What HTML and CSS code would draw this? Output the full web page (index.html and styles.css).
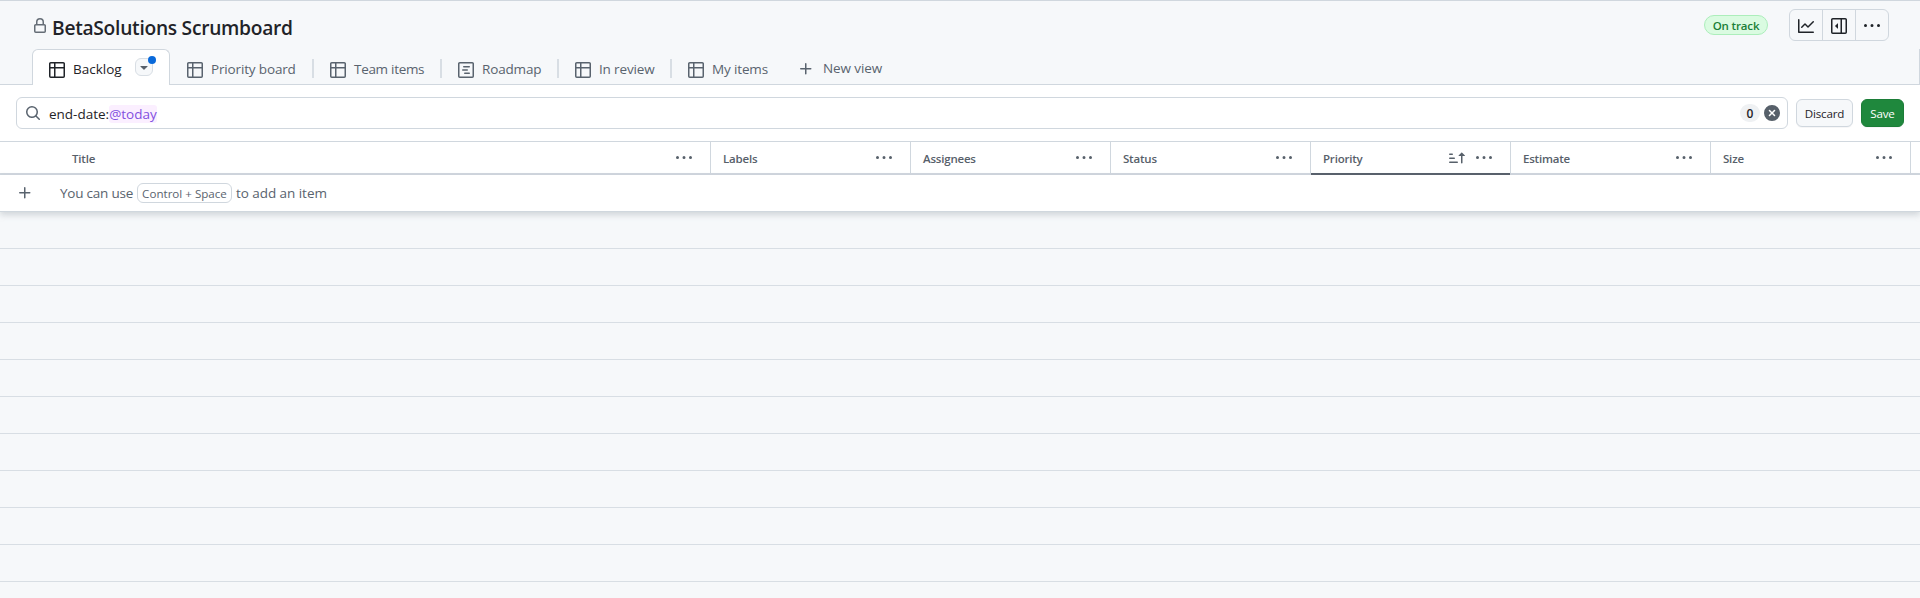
FILE: index.html
```html
<!DOCTYPE html>
<html lang="en">
<head>
<meta charset="utf-8">
<title>BetaSolutions Scrumboard</title>
<link rel="stylesheet" href="styles.css">
</head>
<body>
<svg class="sprite" aria-hidden="true">
  <symbol id="i-table" viewBox="0 0 16 16"><path d="M0 1.75C0 .784.784 0 1.75 0h12.5C15.216 0 16 .784 16 1.75v12.5A1.75 1.75 0 0 1 14.25 16H1.75A1.75 1.75 0 0 1 0 14.25ZM6.5 6.5v8h7.75a.25.25 0 0 0 .25-.25V6.5Zm8-1.5V1.75a.25.25 0 0 0-.25-.25H6.5V5Zm-13 1.5v7.75c0 .138.112.25.25.25H5v-8ZM5 5V1.5H1.75a.25.25 0 0 0-.25.25V5Z"/></symbol>
  <symbol id="i-roadmap" viewBox="0 0 16 16"><path fill-rule="evenodd" d="M1.75 0h12.5C15.216 0 16 .784 16 1.75v12.5A1.75 1.75 0 0 1 14.25 16H1.75A1.75 1.75 0 0 1 0 14.25V1.75C0 .784.784 0 1.75 0ZM1.5 1.75v12.5c0 .138.112.25.25.25h12.5a.25.25 0 0 0 .25-.25V1.75a.25.25 0 0 0-.25-.25H1.75a.25.25 0 0 0-.25.25Z"/><path fill="none" stroke="currentColor" stroke-width="1.5" stroke-linecap="round" d="M5.75 4.75h5.5M4.75 8h4.5M6.75 11.25h4.5"/></symbol>
  <symbol id="i-lock" viewBox="0 0 16 16"><path d="M4 4a4 4 0 0 1 8 0v2h.25c.966 0 1.75.784 1.75 1.75v5.5A1.75 1.75 0 0 1 12.25 15h-8.5A1.75 1.75 0 0 1 2 13.25v-5.5C2 6.784 2.784 6 3.75 6H4Zm8.25 3.5h-8.5a.25.25 0 0 0-.25.25v5.5c0 .138.112.25.25.25h8.5a.25.25 0 0 0 .25-.25v-5.5a.25.25 0 0 0-.25-.25ZM10.5 6V4a2.5 2.5 0 1 0-5 0v2Z"/></symbol>
  <symbol id="i-search" viewBox="0 0 16 16"><path d="M10.68 11.74a6 6 0 0 1-7.922-8.982 6 6 0 0 1 8.982 7.922l3.04 3.04a.749.749 0 0 1-.326 1.275.749.749 0 0 1-.734-.215ZM11.5 7a4.499 4.499 0 1 0-8.997 0A4.499 4.499 0 0 0 11.5 7Z"/></symbol>
  <symbol id="i-graph" viewBox="0 0 16 16"><path d="M1.5 1.75V13.5h13.75a.75.75 0 0 1 0 1.5H.75a.75.75 0 0 1-.75-.75V1.75a.75.75 0 0 1 1.5 0Zm14.28 2.53-5.25 5.25a.75.75 0 0 1-1.06 0L7 7.06 4.28 9.78a.751.751 0 0 1-1.042-.018.751.751 0 0 1-.018-1.042l3.25-3.25a.75.75 0 0 1 1.06 0L10 7.94l4.72-4.72a.751.751 0 0 1 1.042.018.751.751 0 0 1 .018 1.042Z"/></symbol>
  <symbol id="i-sidebar" viewBox="0 0 16 16"><path d="m4.177 7.823 2.396-2.396A.25.25 0 0 1 7 5.604v4.792a.25.25 0 0 1-.427.177L4.177 8.177a.25.25 0 0 1 0-.354Z"/><path d="M0 1.75C0 .784.784 0 1.75 0h12.5C15.216 0 16 .784 16 1.75v12.5A1.75 1.75 0 0 1 14.25 16H1.75A1.75 1.75 0 0 1 0 14.25Zm1.75-.25a.25.25 0 0 0-.25.25v12.5c0 .138.112.25.25.25H9.5v-13Zm12.5 13a.25.25 0 0 0 .25-.25V1.75a.25.25 0 0 0-.25-.25H11v13Z"/></symbol>
  <symbol id="i-kebab" viewBox="0 0 16 16"><path d="M8 9a1.5 1.5 0 1 0 0-3 1.5 1.5 0 0 0 0 3ZM1.5 9a1.5 1.5 0 1 0 0-3 1.5 1.5 0 0 0 0 3Zm13 0a1.5 1.5 0 1 0 0-3 1.5 1.5 0 0 0 0 3Z"/></symbol>
  <symbol id="i-sort" viewBox="0 0 16 16"><path d="m12.927 2.573 3 3A.25.25 0 0 1 15.75 6H13.5v6.75a.75.75 0 0 1-1.5 0V6H9.75a.25.25 0 0 1-.177-.427l3-3a.25.25 0 0 1 .354 0ZM0 12.25a.75.75 0 0 1 .75-.75h7.5a.75.75 0 0 1 0 1.5H.75a.75.75 0 0 1-.75-.75Zm0-4a.75.75 0 0 1 .75-.75h4.5a.75.75 0 0 1 0 1.5H.75A.75.75 0 0 1 0 8.25Zm0-4a.75.75 0 0 1 .75-.75h2.5a.75.75 0 0 1 0 1.5H.75A.75.75 0 0 1 0 4.25Z"/></symbol>
  <symbol id="i-plus" viewBox="0 0 16 16"><path d="M7.75 2a.75.75 0 0 1 .75.75V7h4.25a.75.75 0 0 1 0 1.5H8.5v4.25a.75.75 0 0 1-1.5 0V8.5H2.75a.75.75 0 0 1 0-1.5H7V2.75A.75.75 0 0 1 7.75 2Z"/></symbol>
  <symbol id="i-clear" viewBox="0 0 16 16"><path d="M2.343 13.657A8 8 0 1 1 13.658 2.343 8 8 0 0 1 2.343 13.657ZM6.03 4.97a.751.751 0 0 0-1.042.018.751.751 0 0 0-.018 1.042L6.94 8 4.97 9.97a.749.749 0 0 0 .326 1.275.749.749 0 0 0 .734-.215L8 9.06l1.97 1.97a.749.749 0 0 0 1.275-.326.749.749 0 0 0-.215-.734L9.06 8l1.97-1.97a.749.749 0 0 0-.326-1.275.749.749 0 0 0-.734.215L8 6.94Z"/></symbol>
  <symbol id="i-triangle" viewBox="0 0 16 16"><path d="m4.427 7.427 3.396 3.396a.25.25 0 0 0 .354 0l3.396-3.396A.25.25 0 0 0 11.396 7H4.604a.25.25 0 0 0-.177.427Z"/></symbol>
</svg>

<header class="project-header">
  <div class="title-row">
    <svg class="icon lock"><use href="#i-lock"/></svg>
    <h1 class="title">BetaSolutions Scrumboard</h1>
    <span class="status">On track</span>
    <div class="actions">
      <button class="action"><svg class="icon"><use href="#i-graph"/></svg></button>
      <button class="action"><svg class="icon"><use href="#i-sidebar"/></svg></button>
      <button class="action"><svg class="icon kebab"><use href="#i-kebab"/></svg></button>
    </div>
  </div>
  <nav class="tabs">
    <div class="tab tab-active">
      <svg class="icon"><use href="#i-table"/></svg><span class="label label-backlog">Backlog</span>
      <button class="view-menu"><svg class="icon"><use href="#i-triangle"/></svg><i class="dot"></i></button>
    </div>
    <div class="tab tab-first"><svg class="icon"><use href="#i-table"/></svg><span class="label label-priority">Priority board</span></div>
    <div class="tab"><svg class="icon"><use href="#i-table"/></svg><span class="label label-team">Team items</span></div>
    <div class="tab"><svg class="icon"><use href="#i-roadmap"/></svg><span class="label label-roadmap">Roadmap</span></div>
    <div class="tab"><svg class="icon"><use href="#i-table"/></svg><span class="label label-review">In review</span></div>
    <div class="tab tab-last"><svg class="icon"><use href="#i-table"/></svg><span class="label label-mine">My items</span></div>
    <div class="new-view"><svg class="icon"><use href="#i-plus"/></svg><span class="new-label">New view</span></div>
    <div class="tabs-end"></div>
  </nav>
</header>

<section class="filter-bar">
  <div class="filter">
    <svg class="icon search"><use href="#i-search"/></svg>
    <span class="query">end-date:<span class="keyword">@today</span></span>
    <span class="counter">0</span>
    <svg class="icon clear"><use href="#i-clear"/></svg>
  </div>
  <button class="btn">Discard</button>
  <button class="btn btn-primary">Save</button>
</section>

<main class="grid">
  <div class="columns">
    <div class="column column-title"><span class="name">Title</span><svg class="icon"><use href="#i-kebab"/></svg></div>
    <div class="column"><span class="name">Labels</span><svg class="icon"><use href="#i-kebab"/></svg></div>
    <div class="column"><span class="name">Assignees</span><svg class="icon"><use href="#i-kebab"/></svg></div>
    <div class="column"><span class="name">Status</span><svg class="icon"><use href="#i-kebab"/></svg></div>
    <div class="column column-sorted"><span class="name">Priority</span><svg class="icon sort"><use href="#i-sort"/></svg><svg class="icon"><use href="#i-kebab"/></svg></div>
    <div class="column"><span class="name">Estimate</span><svg class="icon"><use href="#i-kebab"/></svg></div>
    <div class="column"><span class="name">Size</span><svg class="icon"><use href="#i-kebab"/></svg></div>
  </div>
  <div class="add-row">
    <svg class="icon"><use href="#i-plus"/></svg>
    <span class="hint hint-start">You can use</span><kbd class="kbd">Control + Space</kbd><span class="hint">to add an item</span>
  </div>
  <div class="empty-rows"></div>
</main>
</body>
</html>
```
FILE: styles.css
```css
* { box-sizing: border-box; }
body {
  margin: 0;
  height: 598px;
  overflow: hidden;
  display: flex;
  flex-direction: column;
  background: #fff;
  color: #1f2328;
  font: 13.5px/20px "Open Sans", "Noto Sans", sans-serif;
}
button { font: inherit; color: inherit; margin: 0; padding: 0; }
.sprite { display: none; }
.icon { width: 16px; height: 16px; flex: none; fill: currentColor; display: block; }

/* Project header */
.project-header {
  height: 85px;
  flex: none;
  background: #f6f8fa;
  border-top: 1px solid #d0d7de;
  box-shadow: inset 0 -1px #d0d7de;
}
.title-row { height: 48px; display: flex; align-items: flex-start; padding: 8px 31px 0 32px; }
.lock { color: #656d76; margin-top: 9px; }
.title {
  margin: 4px auto 0 4px;
  font-size: 19.2px;
  line-height: 30px;
  font-weight: 600;
  letter-spacing: -0.27px;
}
.status {
  width: 64px;
  height: 20px;
  margin: 6px 21px 0 0;
  border: 1px solid #aceebb;
  border-radius: 10px;
  background: #dafbe1;
  color: #1a7f37;
  font-size: 11.5px;
  line-height: 19px;
  font-weight: 600;
  letter-spacing: -0.15px;
  text-align: center;
}
.actions { display: flex; width: 100px; height: 32px; border: 1px solid #d0d7de; border-radius: 6px; }
.action {
  flex: 1;
  display: flex;
  align-items: center;
  justify-content: center;
  border: 0;
  background: none;
  padding-top: 2px;
}
.action + .action { border-left: 1px solid #d0d7de; }

/* View tabs */
.tabs { height: 36px; display: flex; padding-left: 32px; color: #59636e; }
.tab { display: flex; align-items: center; padding: 6px 16px 0; position: relative; }
.tab-active {
  width: 138px;
  padding: 4px 0 0 16px;
  background: #fff;
  border: 1px solid #d0d7de;
  border-bottom: 0;
  border-radius: 6px 6px 0 0;
  color: #1f2328;
}
.tab-first { padding-left: 17px; }
.tab:not(.tab-active):not(.tab-last)::after {
  content: "";
  position: absolute;
  right: -2px;
  top: 10px;
  width: 2px;
  height: 19px;
  background: #d8dee4;
}
.tab:not(.tab-active):not(.tab-first) { padding-left: 18px; }
.label { margin: -2px 0 0 8px; white-space: nowrap; letter-spacing: -0.15px; }
.label-backlog { width: 62px; letter-spacing: 0; }
.label-priority { width: 85px; }
.label-team { width: 70px; letter-spacing: -0.3px; }
.label-roadmap { width: 59px; }
.label-review { width: 55px; }
.label-mine { width: 56px; }
.view-menu {
  position: relative;
  width: 18px;
  height: 18px;
  margin-top: -5px;
  border: 1px solid #d8dee4;
  border-radius: 6px;
  background: #f6f8fa;
  color: #57606a;
}
.view-menu .dot {
  position: absolute;
  right: -4px;
  top: -3px;
  width: 8px;
  height: 8px;
  border-radius: 50%;
  background: #0969da;
}
.new-view { display: flex; align-items: center; gap: 9px; padding: 3px 0 0 14px; }
.new-label { margin-top: -1px; letter-spacing: -0.1px; }
.tabs-end { width: 1px; margin-left: auto; background: #d0d7de; }

/* Filter */
.filter-bar { height: 56px; flex: none; display: flex; align-items: center; padding: 0 16px; }
.filter {
  flex: 1;
  height: 32px;
  display: flex;
  align-items: center;
  padding: 0 7px 0 8px;
  margin-right: 8px;
  border: 1px solid #d0d7de;
  border-radius: 6px;
}
.search { color: #59636e; margin-right: 8px; }
.query { margin-right: auto; padding-top: 1px; }
.keyword { background: #fbefff; color: #8250df; border-radius: 3px; }
.counter {
  width: 20px;
  height: 18px;
  margin-right: 4px;
  border-radius: 9px;
  background: #eff1f3;
  font-size: 12px;
  line-height: 19px;
  font-weight: 600;
  text-align: center;
}
.clear { color: #57606a; }
.btn {
  width: 57px;
  height: 28px;
  padding-top: 2px;
  margin-right: 8px;
  border: 1px solid #d0d7de;
  border-radius: 6px;
  background: #f6f8fa;
  box-shadow: 0 1px 0 rgba(31, 35, 40, 0.04);
  font-size: 11.6px;
  font-weight: 500;
  letter-spacing: -0.2px;
}
.btn-primary { width: 43px; margin-right: 0; background: #1f883d; border-color: #1c7d38; color: #fff; }

/* Table */
.grid { flex: 1; display: flex; flex-direction: column; background: #f6f8fa; }
.columns {
  height: 34px;
  flex: none;
  display: flex;
  background: #fff;
  border-top: 1px solid #d0d7de;
  box-shadow: inset 0 -2px #d0d7de;
  color: #57606a;
}
.column {
  width: 200px;
  height: 33px;
  display: flex;
  align-items: center;
  justify-content: space-between;
  padding: 0 18px 2px 12px;
  border-right: 1px solid #d0d7de;
}
.column-title { width: 711px; padding-left: 72px; }
.column-sorted { box-shadow: inset 0 -2px #57606a; }
.column .name { font-size: 11.5px; font-weight: 600; letter-spacing: -0.2px; padding-top: 2px; }
.sort { margin: 0 11px 0 auto; }
.add-row {
  height: 37px;
  flex: none;
  display: flex;
  align-items: center;
  padding-left: 17px;
  background: #fff;
  border-bottom: 1px solid #d0d7de;
  box-shadow: 0 3px 6px rgba(140, 149, 159, 0.35);
  color: #59636e;
}
.hint { letter-spacing: -0.05px; }
.hint-start { margin-left: 27px; width: 73px; white-space: nowrap; letter-spacing: -0.22px; }
.kbd {
  width: 95px;
  height: 20px;
  margin: 0 4px;
  border: 1px solid #d0d7de;
  border-radius: 6px;
  font: 11.6px/19px "Open Sans", "Noto Sans", sans-serif;
  text-align: center;
}
.empty-rows {
  flex: 1;
  background: repeating-linear-gradient(transparent 0 36px, #d8dee4 36px 37px);
}
```
